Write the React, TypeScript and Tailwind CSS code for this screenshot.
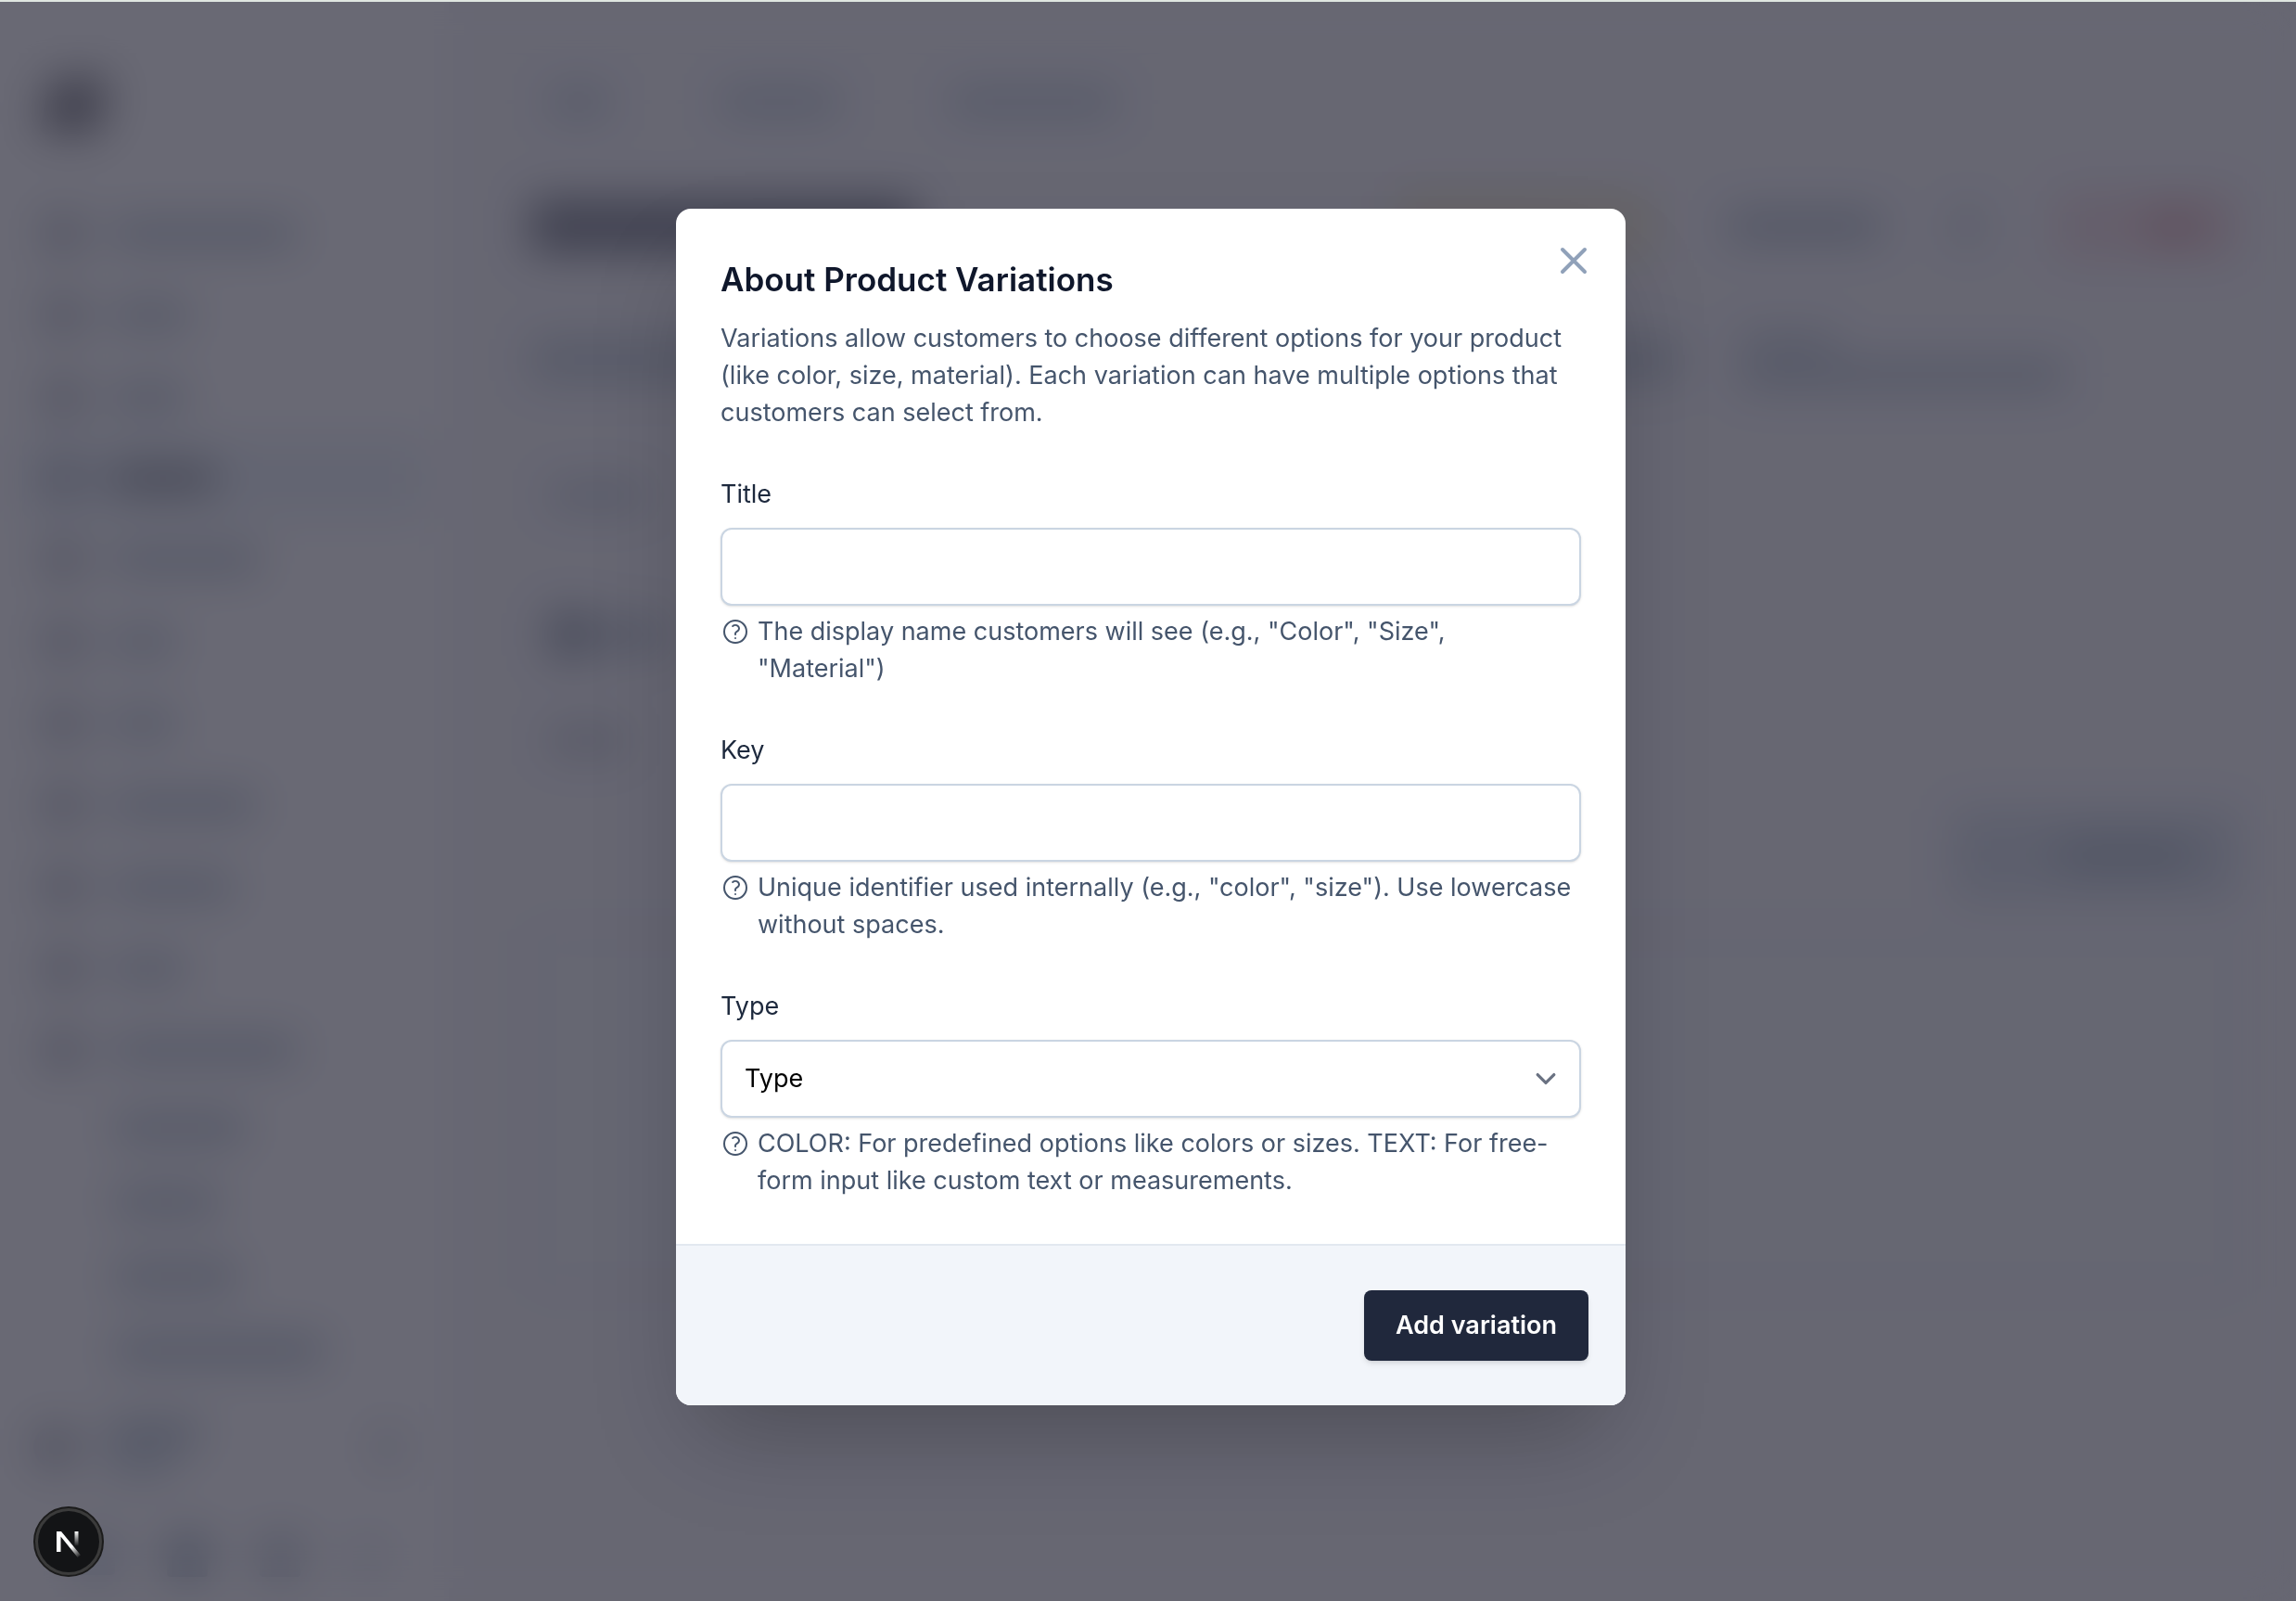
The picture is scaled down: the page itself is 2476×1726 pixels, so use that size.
import React from "react";

const navItems = [
  { label: "w-50", active: false },
  { label: "w-21", active: false },
  { label: "w-20", active: false },
  { label: "w-28", active: true },
  { label: "w-40", active: false },
  { label: "w-17", active: false },
  { label: "w-17", active: false },
  { label: "w-39", active: false },
  { label: "w-33", active: false },
  { label: "w-20", active: false },
  { label: "w-50", active: false },
];

const subItems = ["w-35", "w-28", "w-33", "w-56"];

function Sidebar() {
  return (
    <aside className="flex w-[484px] shrink-0 flex-col bg-white px-6 pt-21 pb-6">
      <div className="ml-6 h-15 w-16 -skew-x-12 rounded-lg bg-[#96969c]" />
      <nav className="mt-16 flex flex-col">
        {navItems.map((item, i) => (
          <div
            key={i}
            className={
              item.active
                ? "flex h-22 items-center gap-8 rounded-xl bg-[#f0f5fa] px-6"
                : "flex h-22 items-center gap-8 px-6"
            }
          >
            <span className="size-10 rounded bg-[#c3c7ce]" />
            <span
              className={`h-7 rounded ${item.label} ${item.active ? "bg-[#a4a8ae]" : "bg-[#c8d1da]"}`}
            />
          </div>
        ))}
        <div className="flex flex-col pl-25">
          {subItems.map((w, i) => (
            <div key={i} className="flex h-20 items-center">
              <span className={`h-7 rounded bg-[#c4ced8] ${w}`} />
            </div>
          ))}
        </div>
      </nav>
      <div className="mt-6 flex h-20 items-center gap-8 px-3">
        <span className="size-12 rounded-full bg-[#c3c7cd]" />
        <span className="flex flex-1 flex-col gap-3">
          <span className="h-6 w-25 rounded bg-[#bcc8d2]" />
          <span className="h-5 w-18 rounded bg-[#c6d2dc]" />
        </span>
        <span className="mr-4 h-10 w-7 rounded bg-[#dcdfe4]" />
      </div>
      <div className="mt-14 flex items-center gap-14 pl-15">
        <span className="size-10 rounded bg-slate-300" />
        <span className="size-11 rounded bg-[#b4c1cd]" />
        <span className="size-11 rounded bg-[#cad2db]" />
        <span className="size-8 rounded bg-slate-200" />
      </div>
    </aside>
  );
}

function ProductPage() {
  return (
    <main className="flex min-w-0 flex-1 flex-col bg-[#f9f9fb] pt-24 pr-15 pl-22">
      <div className="flex h-7 items-center gap-30 pl-5">
        <span className="h-8 w-16 rounded bg-[#d0d9e2]" />
        <span className="h-8 w-32 rounded bg-[#d0d9e2]" />
        <span className="h-8 w-45 rounded bg-[#d0d9e2]" />
      </div>
      <div className="mt-17 flex h-26 items-center justify-between">
        <span className="h-14 w-104 rounded bg-[#979aa4]" />
        <div className="flex items-center gap-20">
          <span className="h-19 w-70 rounded-lg bg-[#f6f0dc]" />
          <span className="h-7 w-41 rounded bg-[#bec8d2]" />
          <span className="h-9 w-7 rounded bg-[#d0d7de]" />
          <span className="flex h-19 w-50 items-center justify-end rounded-lg bg-[#f5e4e8] pr-10">
            <span className="h-7 w-15 rounded bg-[#e5b8be]" />
          </span>
        </div>
      </div>
      <div className="mt-14 flex h-18 items-center justify-between">
        <span className="h-12 w-310 rounded bg-[#d4dbe2]" />
        <span className="mr-47 flex flex-col gap-2">
          <span className="h-6 w-26 rounded bg-[#d2d9e1]" />
          <span className="h-8 w-88 rounded bg-[#ced6de]" />
        </span>
      </div>
      <div className="mt-24 flex flex-col gap-28 pl-5">
        <span className="h-7 w-26 rounded bg-[#d0d7df]" />
        <span className="flex items-center gap-3">
          <span className="size-12 rounded bg-[#aab2bc]" />
          <span className="h-8 w-16 rounded bg-[#c4ccd5]" />
        </span>
        <span className="-mt-9 h-7 w-20 rounded bg-[#ced2d8]" />
      </div>
      <div className="mt-15 flex h-25 items-center justify-end">
        <span className="flex h-25 w-78 items-center justify-end rounded-lg bg-[#e0e6ed] pr-13">
          <span className="h-8 w-36 rounded bg-[#c2cbd4]" />
        </span>
      </div>
      <div className="mt-8 h-96 rounded-2xl border-4 border-[#e4ebf1] bg-[#f7f9fb]" />
    </main>
  );
}

function HelpIcon() {
  return (
    <svg
      viewBox="0 0 24 24"
      fill="none"
      stroke="currentColor"
      strokeWidth={1.5}
      strokeLinecap="round"
      strokeLinejoin="round"
      className="mt-1 size-8 shrink-0"
      aria-hidden="true"
    >
      <path d="M9.879 7.519c1.171-1.025 3.071-1.025 4.242 0 1.172 1.025 1.172 2.687 0 3.712-.203.179-.43.326-.67.442-.745.361-1.45.999-1.45 1.827v.75M21 12a9 9 0 1 1-18 0 9 9 0 0 1 18 0Zm-9 5.25h.008v.008H12v-.008Z" />
    </svg>
  );
}

function Field({
  id,
  label,
  hint,
  children,
}: {
  id: string;
  label: string;
  hint: string;
  children: React.ReactNode;
}) {
  return (
    <div className="flex flex-col">
      <label htmlFor={id} className="mb-4 text-[27px] leading-10 text-slate-800">
        {label}
      </label>
      {children}
      <p id={`${id}-hint`} className="mt-2 flex gap-2 pr-2 text-[27px] leading-10 text-slate-600">
        <HelpIcon />
        <span>{hint}</span>
      </p>
    </div>
  );
}

const controlClass =
  "h-21 w-full appearance-none rounded-xl border-2 border-slate-300 bg-white px-6 text-[27px] text-black shadow-sm outline-none";

function VariationDialog() {
  return (
    <form
      role="dialog"
      aria-modal="true"
      aria-labelledby="dialog-title"
      onSubmit={(e) => e.preventDefault()}
      className="relative w-full max-w-5xl overflow-hidden rounded-2xl bg-white"
    >
      <button type="button" aria-label="Close" className="absolute top-8 right-8 text-slate-400">
        <svg
          viewBox="0 0 24 24"
          fill="none"
          stroke="currentColor"
          strokeWidth={2}
          strokeLinecap="round"
          className="size-12"
          aria-hidden="true"
        >
          <path d="M6 18 18 6M6 6l12 12" />
        </svg>
      </button>
      <div className="flex flex-col gap-12 p-12">
        <header>
          <h2 id="dialog-title" className="text-[35px] leading-14 font-semibold text-slate-900">
            About Product Variations
          </h2>
          <p className="mt-4 text-[27px] leading-10 text-slate-600">
            Variations allow customers to choose different options for your product (like color,
            size, material). Each variation can have multiple options that customers can select
            from.
          </p>
        </header>
        <Field
          id="title"
          label="Title"
          hint={'The display name customers will see (e.g., "Color", "Size", "Material")'}
        >
          <input id="title" type="text" aria-describedby="title-hint" className={controlClass} />
        </Field>
        <Field
          id="key"
          label="Key"
          hint={'Unique identifier used internally (e.g., "color", "size"). Use lowercase without spaces.'}
        >
          <input id="key" type="text" aria-describedby="key-hint" className={controlClass} />
        </Field>
        <Field
          id="type"
          label="Type"
          hint="COLOR: For predefined options like colors or sizes. TEXT: For free-form input like custom text or measurements."
        >
          <div className="relative">
            <select id="type" aria-describedby="type-hint" className={controlClass}>
              <option>Type</option>
            </select>
            <svg
              viewBox="0 0 20 20"
              fill="none"
              stroke="currentColor"
              strokeWidth={1.5}
              strokeLinecap="round"
              strokeLinejoin="round"
              className="pointer-events-none absolute inset-y-0 right-4 my-auto size-11 text-gray-500"
              aria-hidden="true"
            >
              <path d="m6 8 4 4 4-4" />
            </svg>
          </div>
        </Field>
      </div>
      <footer className="flex justify-end border-t-2 border-slate-200 bg-[#f2f5fa] py-12 pr-10">
        <button
          type="submit"
          className="h-19 rounded-lg bg-[#20283c] px-[34px] text-[27px] font-semibold text-white shadow-md"
        >
          Add variation
        </button>
      </footer>
    </form>
  );
}

function DevBadge() {
  return (
    <button
      type="button"
      aria-label="Open developer tools"
      className="fixed bottom-[26px] left-9 flex size-19 items-center justify-center rounded-full border-2 border-[#1b1b1b] bg-[#3b3b3b] p-[3px]"
    >
      <span className="flex size-full items-center justify-center rounded-full bg-[#131416]">
        <svg viewBox="0 0 40 40" fill="none" className="size-10" aria-hidden="true">
          <defs>
            <linearGradient id="diag" x1="20" y1="20" x2="33" y2="36" gradientUnits="userSpaceOnUse">
              <stop offset="0.3" stopColor="#fff" />
              <stop offset="1" stopColor="#fff" stopOpacity="0" />
            </linearGradient>
            <linearGradient id="stem" x1="29" y1="9" x2="29" y2="25" gradientUnits="userSpaceOnUse">
              <stop offset="0" stopColor="#fff" />
              <stop offset="1" stopColor="#fff" stopOpacity="0" />
            </linearGradient>
          </defs>
          <path d="M7 31V9h5l21 25.500-3.300 2.500L11.500 14.500V31Z" fill="url(#diag)" />
          <path d="M26.500 9h4v15.500h-4Z" fill="url(#stem)" />
        </svg>
      </span>
    </button>
  );
}

export default function App() {
  return (
    <div className="relative h-screen overflow-hidden font-[Inter,sans-serif]">
      <div className="flex h-full" aria-hidden="true">
        <Sidebar />
        <ProductPage />
      </div>
      <div className="fixed inset-0 flex items-center justify-center border-t-2 border-[#dfe6e1] bg-[#050517]/60 pt-3 pl-1.5 backdrop-blur-xl">
        <div className="flex w-full max-w-5xl rounded-2xl shadow-[0_50px_100px_-24px_rgba(0,0,0,0.25)]">
          <VariationDialog />
        </div>
      </div>
      <DevBadge />
    </div>
  );
}
